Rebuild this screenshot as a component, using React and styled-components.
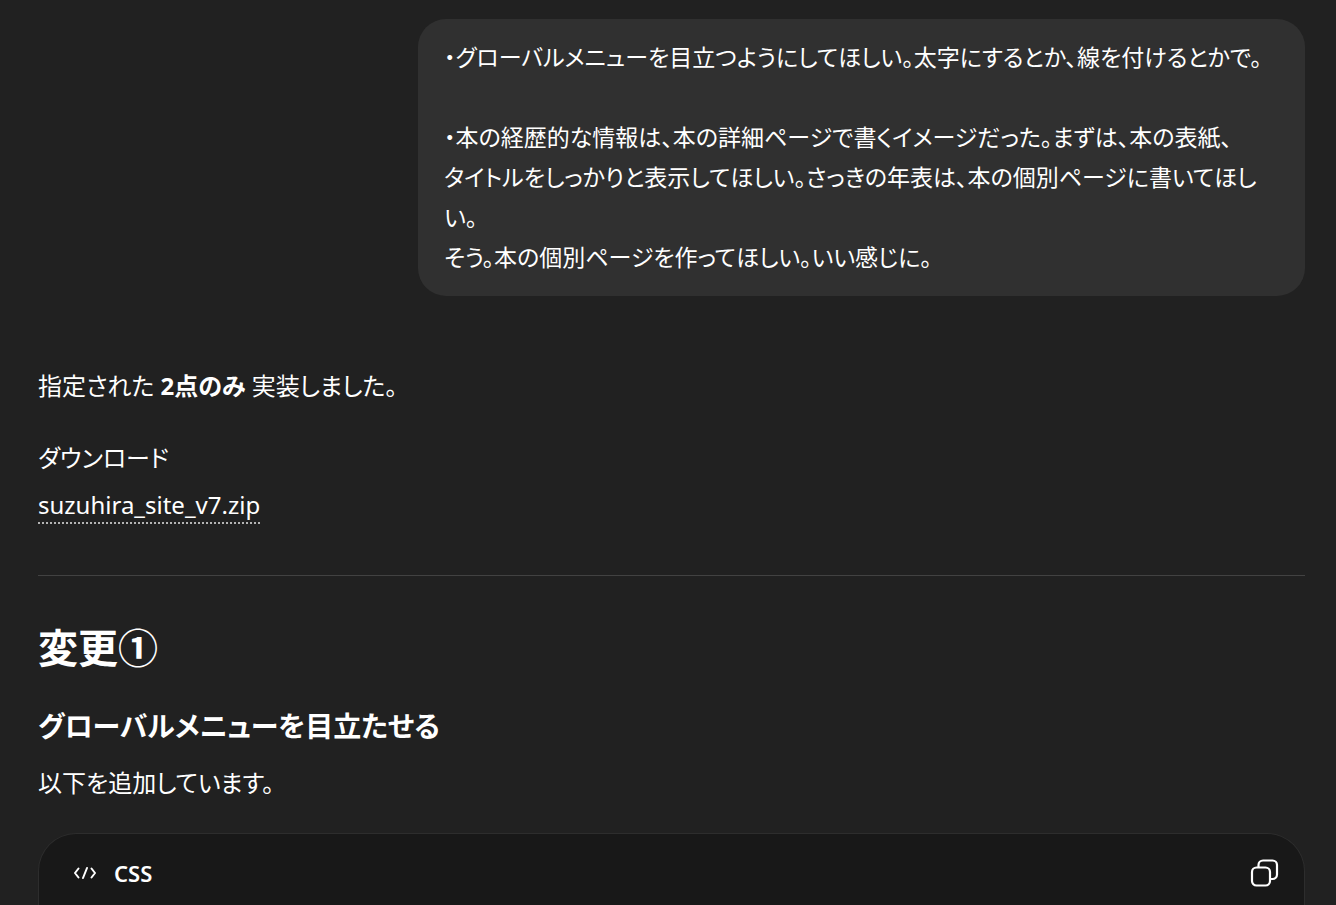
import React from "react";
import styled, { createGlobalStyle } from "styled-components";

const GlobalStyle = createGlobalStyle`
  *, *::before, *::after { box-sizing: border-box; }
  body {
    margin: 0;
    background: #212121;
    color: #fff;
    font-family: "Noto Sans", "Noto Sans CJK JP", sans-serif;
    font-size: 24px;
    line-height: 40px;
    font-feature-settings: "palt";
  }
`;

const Page = styled.main`
  display: flex;
  flex-direction: column;
  min-height: 100vh;
  padding: 19px 31px 0 38px;
`;

const Bubble = styled.div`
  align-self: flex-end;
  width: 70%;
  padding: 18px 26px 19px;
  border-radius: 28px;
  background: #303030;
  font-size: 23px;
  white-space: pre-wrap;
`;

const Reply = styled.article`
  display: flex;
  flex-direction: column;
  flex: 1;
  padding-top: 70px;
`;

const Paragraph = styled.p`
  margin: 0 0 ${({ $gap }) => $gap}px;
`;

const FileLink = styled.a`
  align-self: flex-start;
  color: inherit;
  line-height: 34px;
  text-decoration: none;
  border-bottom: 2px dotted #b4b4b4;
`;

const Divider = styled.hr`
  width: 100%;
  height: 1px;
  margin: 51px 0 46px;
  border: 0;
  background: #424242;
`;

const Title = styled.h2`
  margin: 0 0 30px;
  font-size: 40px;
  line-height: 52px;
  font-weight: 700;
`;

const Subtitle = styled.h3`
  margin: 0 0 15px;
  font-size: 28px;
  line-height: 44px;
  font-weight: 700;
`;

const CodeBlock = styled.section`
  flex: 1;
  border: 1px solid #2d2d2d;
  border-bottom: 0;
  border-radius: 38px 38px 0 0;
  background: #181818;
`;

const CodeHeader = styled.header`
  display: flex;
  align-items: center;
  gap: 17px;
  padding: 19px 25px 11px 34px;
  font-size: 22px;
  font-weight: 600;
`;

const CopyButton = styled.button`
  display: flex;
  margin-left: auto;
  padding: 0;
  border: 0;
  background: none;
  color: inherit;
`;

const CodeIcon = () => (
  <svg width="24" height="16" viewBox="0 0 24 16" fill="none" stroke="currentColor" strokeWidth="2" strokeLinecap="round" strokeLinejoin="round" aria-hidden="true">
    <path d="M5.5 3.5 2 8l3.500 4.500M18.500 3.500l3.500 4.500-3.500 4.500M14 3l-4 10" />
  </svg>
);

const CopyIcon = () => (
  <svg width="30" height="30" viewBox="0 0 30 30" fill="none" stroke="currentColor" strokeWidth="2.2" strokeLinejoin="round" aria-hidden="true">
    <rect x="3" y="9.500" width="18" height="18" rx="4.500" />
    <path d="M9.500 9.500V7A4.500 4.500 0 0 1 14 2.500H23.500A4.500 4.500 0 0 1 28 7V16.500a4.500 4.500 0 0 1-4.500 4.500h-2.500" />
  </svg>
);

const request = `・グローバルメニューを目立つようにしてほしい。太字にするとか、線を付けるとかで。

・本の経歴的な情報は、本の詳細ページで書くイメージだった。まずは、本の表紙、
タイトルをしっかりと表示してほしい。さっきの年表は、本の個別ページに書いてほし
い。
そう。本の個別ページを作ってほしい。いい感じに。`;

export default function App() {
  return (
    <Page lang="ja">
      <GlobalStyle />
      <Bubble>{request}</Bubble>
      <Reply>
        <Paragraph $gap={32}>
          指定された <strong>2点のみ</strong> 実装しました。
        </Paragraph>
        <Paragraph $gap={10}>ダウンロード</Paragraph>
        <FileLink href="#suzuhira_site_v7.zip">suzuhira_site_v7.zip</FileLink>
        <Divider />
        <Title>変更①</Title>
        <Subtitle>グローバルメニューを目立たせる</Subtitle>
        <Paragraph $gap={30}>以下を追加しています。</Paragraph>
        <CodeBlock>
          <CodeHeader>
            <CodeIcon />
            <span>CSS</span>
            <CopyButton type="button" aria-label="コピー">
              <CopyIcon />
            </CopyButton>
          </CodeHeader>
        </CodeBlock>
      </Reply>
    </Page>
  );
}
